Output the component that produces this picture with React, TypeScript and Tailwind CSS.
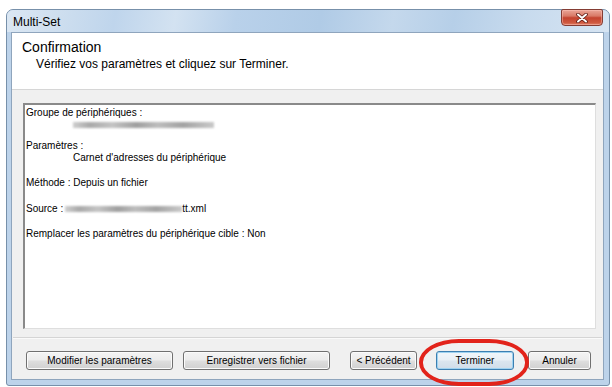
import React from "react";

const btnBase =
  "h-[19px] rounded-[3px] border text-[10px] leading-[17px] text-black text-center whitespace-nowrap";
const btnNormal =
  btnBase +
  " border-[#707070] bg-[linear-gradient(to_bottom,#f4f4f4_0%,#ececec_48%,#dedede_52%,#d0d0d0_100%)] shadow-[inset_0_0_0_1px_#fbfbfb]";
const btnDefault =
  btnBase +
  " border-[#3c7fb1] bg-[linear-gradient(to_bottom,#f1f6fa_0%,#e8eff5_48%,#dbe6ef_52%,#d0dde9_100%)] shadow-[inset_0_0_0_1px_#9fd2f0]";

function Blur({ w }: { w: number }) {
  return (
    <span
      className="inline-block h-[6px] align-middle blur-[0.8px] bg-[linear-gradient(to_right,#cfcfcf_0%,#a9a9a9_12%,#c4c4c4_28%,#9f9f9f_45%,#bdbdbd_60%,#a3a3a3_78%,#c9c9c9_100%)]"
      style={{ width: w }}
    />
  );
}

export default function App() {
  return (
    <div className="relative w-[612px] h-[387px] bg-white overflow-hidden font-['Liberation_Sans',Arial,sans-serif]">
      <div className="ml-[6px] mt-[9px] w-[604px] h-[377px] rounded-t-[7px] rounded-b-[3px] border border-[#7790aa] bg-[#bdd3ea] flex flex-col">
        {/* Title bar */}
        <div className="h-[22px] flex rounded-t-[6px] bg-[linear-gradient(100deg,#dbe7f3_0%,#cfdfef_8%,#bfd5ec_18%,#d3e2f1_28%,#b9d1ea_38%,#b0cbe6_52%,#c4d8ec_64%,#b6cfe8_74%,#c8dbee_86%,#d6e4f2_100%)]">
          <div className="pl-[6px] pt-[5px] text-[12px] leading-[14px] text-black">Multi-Set</div>
          <div className="ml-auto mr-[6px] mt-[-1px] w-[42px] h-[17px] rounded-b-[4px] rounded-t-[2px] border border-[#843c33] bg-[linear-gradient(to_bottom,#eaa597_0%,#d97a67_40%,#c4432f_52%,#cf5a40_85%,#e0826a_100%)] shadow-[inset_0_0_0_1px_rgba(255,200,190,0.45)] flex items-center justify-center">
            <svg width="12" height="10" viewBox="0 0 12 10">
              <path d="M2 1.5 L10 8.5 M10 1.5 L2 8.5" stroke="#5a1a12" strokeWidth="3.6" strokeLinecap="round" />
              <path d="M2 1.5 L10 8.5 M10 1.5 L2 8.5" stroke="#ffffff" strokeWidth="2" strokeLinecap="round" />
            </svg>
          </div>
        </div>

        {/* Client area */}
        <div className="ml-[4px] mr-[5px] mb-[5px] flex-1 flex flex-col border border-[#8fa5bd] bg-[#f0f0f0]">
          <div className="h-[57px] bg-white border-b border-[#d6d6d6] text-black">
            <div className="pl-[10px] pt-[6px] text-[14px] leading-[16px]">Confirmation</div>
            <div className="pl-[24px] mt-[2px] text-[12px] leading-[14px]">
              Vérifiez vos paramètres et cliquez sur Terminer.
            </div>
          </div>

          <div className="ml-[11px] mt-[13px] w-[573px] h-[226px] bg-white border-t-2 border-l-2 border-r border-b border-t-[#8a8a8a] border-l-[#8a8a8a] border-r-[#dedede] border-b-[#dedede] pt-[2px] pl-[1px] text-[10px] leading-[12px] text-black">
            <div>Groupe de périphériques :</div>
            <div className="h-[12px] pl-[47px] flex items-center">
              <Blur w={141} />
            </div>
            <div className="mt-[9px]">Paramètres :</div>
            <div className="pl-[47px]">Carnet d'adresses du périphérique</div>
            <div className="mt-[13px]">Méthode : Depuis un fichier</div>
            <div className="mt-[14px] flex items-center">
              <span>Source :</span>
              <span className="ml-[2px] flex items-center">
                <Blur w={117} />
              </span>
              <span>tt.xml</span>
            </div>
            <div className="mt-[13px]">Remplacer les paramètres du périphérique cible : Non</div>
          </div>

          <div className="mt-[8px] mx-[1px] h-[1px] bg-[#d5d5d5]" />
          <div className="mx-[1px] h-[1px] bg-[#fafafa]" />

          <div className="mt-[12px] flex pl-[14px] pr-[12px]">
            <div className={btnNormal + " w-[147px]"}>Modifier les paramètres</div>
            <div className={btnNormal + " w-[147px] ml-[10px]"}>Enregistrer vers fichier</div>
            <div className={btnNormal + " w-[67px] ml-auto"}>&lt; Précédent</div>
            <div className={btnDefault + " w-[78px] ml-[19px]"}>Terminer</div>
            <div className={btnNormal + " w-[63px] ml-[14px]"}>Annuler</div>
          </div>
        </div>
      </div>

      {/* Red annotation ellipse */}
      <div className="absolute left-[419px] top-[339px] w-[110px] h-[47px] rounded-[40px/23px] border-[4px] border-[#e2231a]" />
    </div>
  );
}
